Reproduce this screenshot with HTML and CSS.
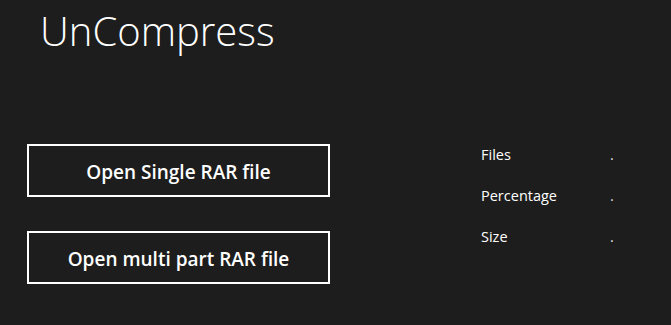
FILE: index.html
```html
<!DOCTYPE html>
<html>
<head>
<meta charset="utf-8"/>
<title>UnCompress</title>
<link rel="stylesheet" href="styles.css">
</head>
<body>

<h1 class="title">UnCompress</h1>

<div class="main">
	<div class="actions">
		<button class="action">Open Single RAR file</button>
		<button class="action">Open multi part RAR file</button>
	</div>
	<div class="info">
		<span class="label">Files</span><span class="value">.</span>
		<span class="label">Percentage</span><span class="value">.</span>
		<span class="label">Size</span><span class="value">.</span>
	</div>
</div>

</body>
</html>
```

FILE: styles.css
```css
body {
	margin: 0;
	background: #1d1d1d;
	color: #fff;
	font-family: "Open Sans", "Noto Sans", sans-serif;
}
.title {
	margin: 0;
	padding: 4px 0 0 40px;
	font-size: 40px;
	font-weight: 300;
	line-height: 54px;
}
/* buttons */
.main {
	display: flex;
	padding: 86px 0 0 27px;
}
.actions {
	display: flex;
	flex-direction: column;
	gap: 34px;
	width: 303px;
}
.action {
	height: 53px;
	padding: 3px 0 0;
	background: transparent;
	color: #fff;
	border: 2px solid #fff;
	font-family: inherit;
	font-size: 19px;
	font-weight: 600;
}
/* info */
.info {
	display: grid;
	grid-template-columns: 129px auto;
	grid-auto-rows: 41px;
	margin: 1px 0 0 151px;
	font-size: 14.5px;
	line-height: 20px;
}
.value {
	color: #ddd;
}
```
